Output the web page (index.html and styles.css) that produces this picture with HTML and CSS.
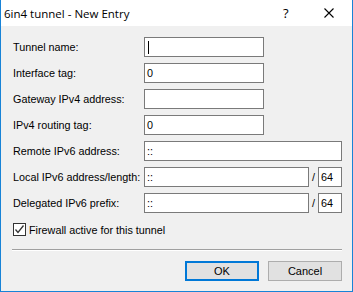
FILE: index.html
```html
<!DOCTYPE html>
<html lang="en">
<head>
    <meta charset="UTF-8">
    <title>6in4 tunnel - New Entry</title>
    <link rel="stylesheet" href="styles.css">
</head>
<body>
    <div class="window">
        <div class="titlebar">
            <span class="title">6in4 tunnel - New Entry</span>
            <span class="help">?</span>
            <span class="close">
                <svg width="10" height="10" viewBox="0 0 10 10">
                    <path d="M0.5 0.5 L9.5 9.5 M9.5 0.5 L0.5 9.5" stroke="#000" stroke-width="1.1" fill="none"/>
                </svg>
            </span>
        </div>

        <div class="content">
            <div class="form">
                <label>Tunnel name:</label>
                <div class="field short"><span class="caret"></span></div>

                <label>Interface tag:</label>
                <div class="field short">0</div>

                <label>Gateway IPv4 address:</label>
                <div class="field short"></div>

                <label>IPv4 routing tag:</label>
                <div class="field short">0</div>

                <label>Remote IPv6 address:</label>
                <div class="field wide">::</div>

                <label>Local IPv6 address/length:</label>
                <div class="split">
                    <div class="field grow">::</div>
                    <span class="slash">/</span>
                    <div class="field prefix">64</div>
                </div>

                <label>Delegated IPv6 prefix:</label>
                <div class="split">
                    <div class="field grow">::</div>
                    <span class="slash">/</span>
                    <div class="field prefix">64</div>
                </div>
            </div>

            <div class="check-row">
                <span class="checkbox">
                    <svg width="11" height="11" viewBox="0 0 11 11">
                        <path d="M1.5 5.5 L4 8.5 L9.5 1.5" stroke="#333" stroke-width="1.3" fill="none"/>
                    </svg>
                </span>
                <span>Firewall active for this tunnel</span>
            </div>

            <div class="separator"></div>

            <div class="buttons">
                <button class="btn default">OK</button>
                <button class="btn">Cancel</button>
            </div>
        </div>
    </div>
</body>
</html>
```

FILE: styles.css
```css
body {
    margin: 0;
    font-family: "Liberation Sans", Arial, sans-serif;
    font-size: 10.8px;
    color: #000;
}

.window {
    width: 353px;
    height: 292px;
    box-sizing: border-box;
    border: 1px solid #1883d7;
    border-top: none;
    background: #f0f0f0;
    display: flex;
    flex-direction: column;
}

/* Title bar */
.titlebar {
    height: 26px;
    background: #fff;
    display: flex;
    align-items: center;
    padding-left: 3px;
    font-family: "Open Sans", sans-serif;
    font-size: 11.5px;
}

.title {
    flex: 1;
}

.help {
    width: 14px;
    margin-right: 27px;
    font-size: 13px;
}

.close {
    display: flex;
    margin-right: 18px;
}

/* Content */
.content {
    padding: 11px 10px 0 11px;
}

.form {
    display: grid;
    grid-template-columns: 132px 198px;
    row-gap: 6px;
    align-items: center;
}

.form label {
    padding-left: 1px;
}

.field {
    height: 20px;
    box-sizing: border-box;
    border: 1px solid #7a7a7a;
    background: #fff;
    padding: 0 2px;
    line-height: 18px;
    display: flex;
    align-items: center;
}

.field.short {
    width: 120px;
}

.split {
    display: flex;
    align-items: center;
}

.field.grow {
    flex: 1;
}

.field.prefix {
    width: 24px;
}

.slash {
    width: 9px;
    text-align: center;
}

.caret {
    width: 1px;
    height: 13px;
    background: #000;
    margin-left: 1px;
}

.check-row {
    display: flex;
    align-items: center;
    gap: 3px;
    margin-top: 10px;
    padding-left: 1px;
    height: 13px;
}

.checkbox {
    width: 13px;
    height: 13px;
    box-sizing: border-box;
    border: 1px solid #333;
    background: #fff;
    display: flex;
    align-items: center;
    justify-content: center;
}

.separator {
    margin-top: 13px;
    width: 330px;
    height: 0;
    border-top: 1px solid #a0a0a0;
    border-bottom: 1px solid #fff;
}

.buttons {
    display: flex;
    justify-content: flex-end;
    gap: 9px;
    margin-top: 10px;
}

.btn {
    width: 74px;
    height: 20px;
    box-sizing: border-box;
    border: 1px solid #adadad;
    background: #e1e1e1;
    font-family: "Liberation Sans", Arial, sans-serif;
    font-size: 11px;
    padding: 0;
    color: #000;
}

.btn.default {
    border: 2px solid #0078d7;
}
```
